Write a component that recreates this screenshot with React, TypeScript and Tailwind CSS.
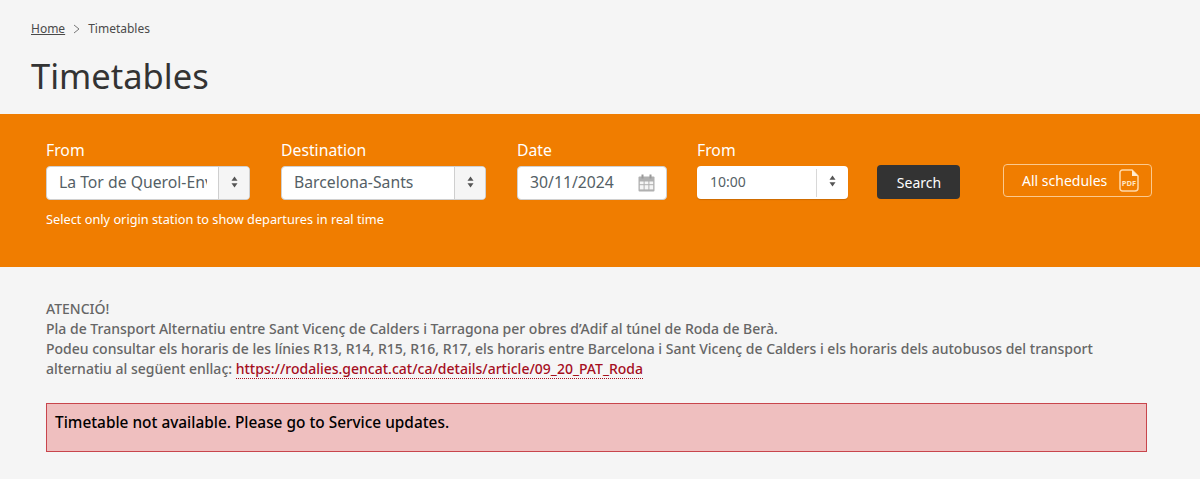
import React from "react";

function Spinner() {
  return (
    <svg width="7" height="12" viewBox="0 0 7 12" className="block">
      <path d="M3.5 0.5 L6.5 4.8 H0.5 Z" fill="#555" />
      <path d="M3.5 11.5 L6.5 7.2 H0.5 Z" fill="#555" />
    </svg>
  );
}

function SelectBox({ value, width }: { value: string; width: string }) {
  return (
    <div className={`flex h-[34px] ${width} rounded-[4px] bg-white border border-[#d0d0d0] overflow-hidden`}>
      <div className="flex-1 min-w-0 pl-3 pr-[11px] flex items-center">
        <div className="overflow-hidden whitespace-nowrap text-[15.75px] text-[#555f66]">{value}</div>
      </div>
      <div className="w-[31px] shrink-0 flex items-center justify-center bg-[#f5f5f5] border-l border-[#cfcfcf] pb-[2px]">
        <Spinner />
      </div>
    </div>
  );
}

function CalendarIcon() {
  return (
    <svg width="17" height="18" viewBox="0 0 17 18" className="block">
      <rect x="0.5" y="2.5" width="16" height="15" rx="1" fill="#b0b0b0" />
      <rect x="3.5" y="0.5" width="2" height="4" fill="#9a9a9a" />
      <rect x="11.5" y="0.5" width="2" height="4" fill="#9a9a9a" />
      <g fill="#f5f5f5">
        <rect x="1.8" y="7.5" width="3.8" height="2.7" />
        <rect x="6.6" y="7.5" width="3.8" height="2.7" />
        <rect x="11.4" y="7.5" width="3.8" height="2.7" />
        <rect x="1.8" y="11.2" width="3.8" height="4.2" />
        <rect x="6.6" y="11.2" width="3.8" height="4.2" />
        <rect x="11.4" y="11.2" width="3.8" height="4.2" />
      </g>
    </svg>
  );
}

function PdfIcon() {
  return (
    <svg width="20" height="23" viewBox="0 0 20 23" className="block">
      <path d="M3.5 1 H13 L19 7 V19 a3 3 0 0 1 -3 3 H3.5 a2.5 2.5 0 0 1 -2.5 -2.5 V3.5 a2.5 2.5 0 0 1 2.5 -2.5 Z" fill="none" stroke="#ffd9a8" strokeWidth="1.5" />
      <path d="M13 1 V7 H19 Z" fill="#ffecd2" />
      <text x="10" y="16.5" textAnchor="middle" fontSize="7.5" fontWeight="700" fill="#ffe6c4" fontFamily="'Open Sans', sans-serif">PDF</text>
    </svg>
  );
}

export default function App() {
  return (
    <div className="min-h-[479px] bg-[#f5f5f5] font-['Noto_Sans',sans-serif] text-[#333]">
      <div className="h-[114px] px-[31px] pt-[19px]">
        <div className="flex items-center h-5 text-[12px] leading-5 text-[#4a4a4a]">
          <span className="underline">Home</span>
          <svg width="7" height="10" viewBox="0 0 7 10" className="mx-[8px]">
            <path d="M1 1 L6 5 L1 9" fill="none" stroke="#777" strokeWidth="1" />
          </svg>
          <span>Timetables</span>
        </div>
        <h1 className="mt-[12px] text-[34.5px] leading-[50px] font-normal text-[#333]">Timetables</h1>
      </div>

      <div className="h-[153px] bg-[#f07d00] pl-[46px] pt-[24px] text-white">
        <div className="flex items-start">
          <div className="w-[204px]">
            <div className="text-[15.75px] leading-[24px] mb-[4px]">From</div>
            <SelectBox value="La Tor de Querol-Enveig" width="w-[204px]" />
            <div className="mt-[9px] text-[12.75px] leading-[20px] whitespace-nowrap">Select only origin station to show departures in real time</div>
          </div>
          <div className="w-[205px] ml-[31px]">
            <div className="text-[15.75px] leading-[24px] mb-[4px]">Destination</div>
            <SelectBox value="Barcelona-Sants" width="w-[205px]" />
          </div>
          <div className="w-[150px] ml-[31px]">
            <div className="text-[15.75px] leading-[24px] mb-[4px]">Date</div>
            <div className="h-[34px] rounded-[4px] bg-white border border-[#d0d0d0] flex items-center justify-between pl-3 pr-[11px]">
              <span className="text-[15.75px] text-[#555f66]">30/11/2024</span>
              <CalendarIcon />
            </div>
          </div>
          <div className="w-[151px] ml-[30px]">
            <div className="text-[15.75px] leading-[24px] mb-[4px]">From</div>
            <div className="h-[33px] rounded-[4px] bg-white flex items-center overflow-hidden shadow-[0_1px_1px_rgba(0,0,0,0.15)]">
              <span className="flex-1 pl-[13px] pb-[2px] text-[14px] text-[#555f66]">10:00</span>
              <div className="w-[32px] h-[28px] pb-[3px] flex items-center justify-center border-l border-[#d8d8d8]">
                <Spinner />
              </div>
            </div>
          </div>
          <button className="ml-[29px] mt-[27px] w-[83px] h-[34px] rounded-[4px] bg-[#333] text-white text-[14px] pl-[1px]">Search</button>
          <div className="ml-[43px] mt-[26px] w-[149px] h-[33px] rounded-[4px] border border-[#fbc98e] flex items-center pl-[18px] pr-[12px] justify-between text-[14px]">
            <span>All schedules</span>
            <PdfIcon />
          </div>
        </div>
      </div>

      <div className="pl-[46px] pr-[53px] pt-[32px] text-[14px] leading-[20px] font-medium text-[#666]">
        <p>ATENCIÓ!</p>
        <p>Pla de Transport Alternatiu entre Sant Vicenç de Calders i Tarragona per obres d’Adif al túnel de Roda de Berà.</p>
        <p>
          Podeu consultar els horaris de les línies R13, R14, R15, R16, R17, els horaris entre Barcelona i Sant Vicenç de Calders i els horaris dels autobusos del transport alternatiu al següent enllaç:{" "}
          <a className="text-[#a50e1e] border-b border-dotted border-[#a50e1e]">https://rodalies.gencat.cat/ca/details/article/09_20_PAT_Roda</a>
        </p>
        <div className="mt-[24px] h-[49px] bg-[#efbfbf] border border-[#c8454c] pl-[8px] pt-[8px] text-[15.4px] leading-[22px] font-medium text-black">
          Timetable not available. Please go to Service updates.
        </div>
      </div>
    </div>
  );
}
